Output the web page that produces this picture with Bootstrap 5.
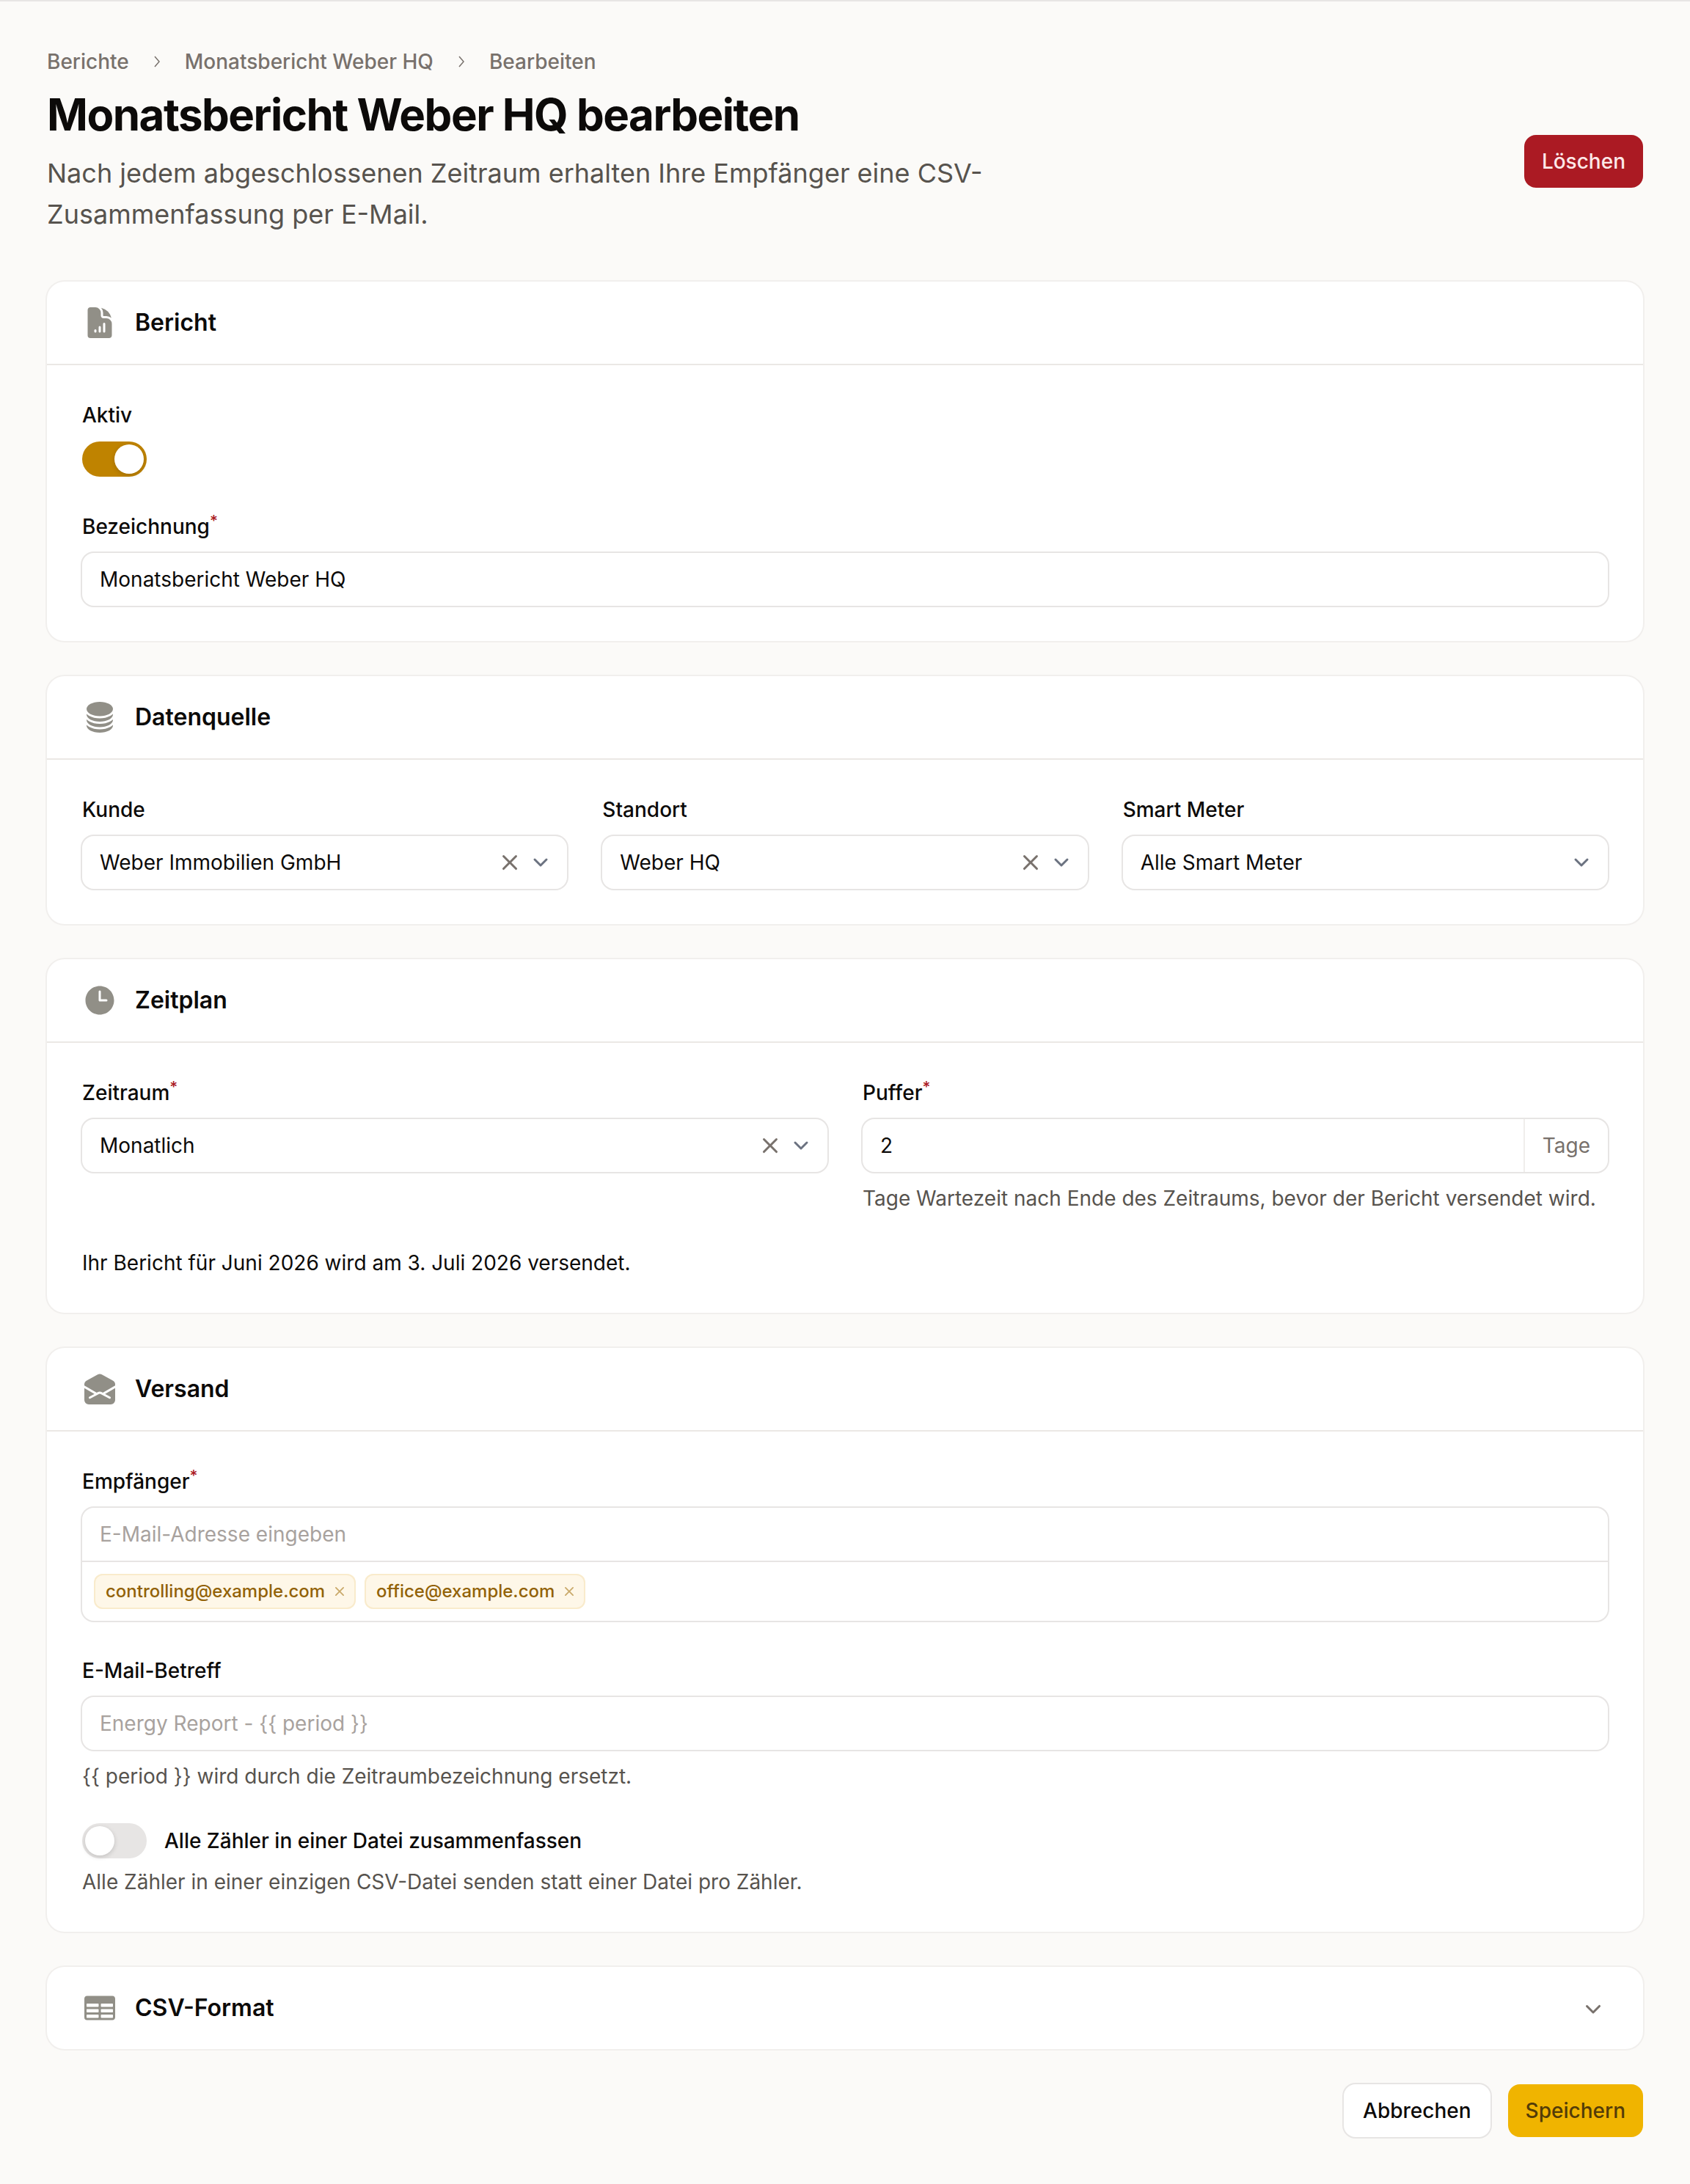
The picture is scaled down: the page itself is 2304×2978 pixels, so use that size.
<!DOCTYPE html>
<html lang="de">
<head>
    <meta charset="UTF-8">
    <meta name="viewport" content="width=device-width, initial-scale=1.0">
    <title>Monatsbericht Weber HQ bearbeiten</title>
    <link href="https://cdn.jsdelivr.net/npm/bootstrap@5.3.3/dist/css/bootstrap.min.css" rel="stylesheet">
    <style>
        body { background: #fbfaf8; color: #0c0a09; font-family: Inter, "Liberation Sans", sans-serif; font-size: 28px; line-height: 40px; border-top: 2px solid #e7e5e4; }
        main { padding: 62px 64px 64px; }
        svg { display: block; flex-shrink: 0; }

        .crumbs { color: #78716c; font-weight: 500; height: 40px; margin-bottom: 16px; gap: 28px; }
        .crumbs svg { width: 20px; height: 20px; }
        h1 { font-size: 60px; line-height: 72px; font-weight: 700; letter-spacing: -1.5px; margin: 0 0 16px; }
        .lead-text { font-size: 36px; line-height: 56px; color: #57534e; max-width: 1344px; margin: 0; font-weight: 400; }
        .page-head { margin-bottom: 64px; }

        .btn-x { font-size: 28px; line-height: 40px; font-weight: 500; height: 72px; padding: 16px 24px; border: 0; border-radius: 16px; }
        .btn-danger-x { background: #ab1a23; color: #fde8e8; }
        .btn-cancel { background: #fff; color: #0c0a09; box-shadow: 0 0 0 2px #e7e5e4; padding: 16px 26px; }
        .btn-save { background: #f0b400; color: #533c08; }

        .card { border: 0; border-radius: 24px; box-shadow: 0 0 0 2px #f1efed; margin-bottom: 48px; background: #fff; }
        .card-header { background: transparent; border: 0; padding: 32px 48px; height: 112px; gap: 24px; border-radius: 24px 24px 0 0 !important; }
        .card-header svg.ic { width: 48px; height: 48px; fill: #918f87; }
        .card-title { font-size: 32px; line-height: 48px; font-weight: 600; margin: 0; }
        .card-body { padding: 48px; border-top: 2px solid #ebe8e5; }

        .form-label { font-weight: 500; margin-bottom: 16px; display: block; }
        sup.req { color: #ab1a23; font-weight: 500; }
        .field + .field { margin-top: 48px; }

        .box { background: #fff; border-radius: 16px; box-shadow: 0 0 0 2px #e7e5e4; height: 72px; }
        .box .form-control { background: transparent; border: 0; box-shadow: none; font-size: 28px; line-height: 40px; padding: 16px 24px; color: #0c0a09; height: 72px; border-radius: 16px; }
        .box .form-control::placeholder { color: #a8a29e; opacity: 1; }
        .sel { padding: 16px 16px 16px 24px; }
        .sel svg { width: 40px; height: 40px; }
        .sel .clear { fill: #78716c; margin-right: 2px; }
        .sel .arrow { fill: none; stroke: #6b7280; stroke-width: 1.5; stroke-linecap: round; stroke-linejoin: round; }
        .suffix { color: #78716c; padding: 16px 24px; border-left: 2px solid #f0eeec; }
        .hint { color: #57534e; margin-top: 16px; }

        .tgl { width: 88px; height: 48px; padding: 4px; border-radius: 24px; border: 0; display: flex; flex-shrink: 0; }
        .tgl span { width: 40px; height: 40px; border-radius: 50%; background: #fff; box-shadow: 0 2px 6px rgba(0,0,0,.16); }
        .tgl.on { background: #bf8300; justify-content: flex-end; }
        .tgl.off { background: #e7e5e4; margin: -4px 0; }
        .tgl-row { gap: 24px; font-weight: 500; }

        .tags-box { height: auto; }
        .tags { border-top: 2px solid #e7e5e4; padding: 16px; gap: 12px; }
        .tag { height: 48px; border-radius: 12px; background: #fef7e8; box-shadow: inset 0 0 0 2px #f9ebcc; color: #926207; font-size: 24px; line-height: 48px; font-weight: 500; padding: 0 10px 0 16px; gap: 8px; }
        .tag svg { width: 24px; height: 24px; fill: #c9a96a; }
        .collapse-arrow { width: 40px; height: 40px; fill: #78716c; }
        .actions { gap: 24px; }
    </style>
</head>
<body>
<main>
    <div class="crumbs d-flex align-items-center">
        <span>Berichte</span>
        <svg viewBox="0 0 20 20" fill="none" stroke="#78716c" stroke-width="1.5"><path d="m7 3 6 7-6 7"/></svg>
        <span>Monatsbericht Weber HQ</span>
        <svg viewBox="0 0 20 20" fill="none" stroke="#78716c" stroke-width="1.5"><path d="m7 3 6 7-6 7"/></svg>
        <span>Bearbeiten</span>
    </div>

    <div class="page-head d-flex align-items-center justify-content-between">
        <div>
            <h1>Monatsbericht Weber HQ bearbeiten</h1>
            <p class="lead-text">Nach jedem abgeschlossenen Zeitraum erhalten Ihre Empfänger eine CSV-Zusammenfassung per E-Mail.</p>
        </div>
        <button type="button" class="btn btn-x btn-danger-x">Löschen</button>
    </div>

    <form>
        <!-- Bericht -->
        <section class="card">
            <div class="card-header d-flex align-items-center">
                <svg class="ic" viewBox="0 0 24 24"><path fill-rule="evenodd" clip-rule="evenodd" d="M5.625 1.5H9a3.75 3.75 0 0 1 3.75 3.75v1.875c0 1.036.84 1.875 1.875 1.875H16.5a3.75 3.75 0 0 1 3.75 3.75v7.875c0 1.035-.84 1.875-1.875 1.875H5.625a1.875 1.875 0 0 1-1.875-1.875V3.375c0-1.036.84-1.875 1.875-1.875ZM9.75 17.25a.75.75 0 0 0-1.5 0V18a.75.75 0 0 0 1.5 0v-.75Zm2.25-3a.75.75 0 0 1 .75.75v3a.75.75 0 0 1-1.5 0v-3a.75.75 0 0 1 .75-.75Zm3.75-1.5a.75.75 0 0 0-1.5 0V18a.75.75 0 0 0 1.5 0v-5.25Z"/><path d="M14.25 5.25a5.23 5.23 0 0 0-1.279-3.434 9.768 9.768 0 0 1 6.963 6.963A5.23 5.23 0 0 0 16.5 7.5h-1.875a.375.375 0 0 1-.375-.375V5.25Z"/></svg>
                <h2 class="card-title">Bericht</h2>
            </div>
            <div class="card-body">
                <div class="field">
                    <span class="form-label">Aktiv</span>
                    <div class="tgl on"><span></span></div>
                </div>
                <div class="field">
                    <label class="form-label" for="name">Bezeichnung<sup class="req">*</sup></label>
                    <div class="box"><input id="name" class="form-control" type="text" value="Monatsbericht Weber HQ"></div>
                </div>
            </div>
        </section>

        <!-- Datenquelle -->
        <section class="card">
            <div class="card-header d-flex align-items-center">
                <svg class="ic" viewBox="0 0 24 24"><path d="M21 6.375c0 2.692-4.03 4.875-9 4.875S3 9.067 3 6.375 7.03 1.5 12 1.5s9 2.183 9 4.875Z"/><path d="M12 12.75c2.685 0 5.19-.586 7.078-1.609a8.283 8.283 0 0 0 1.897-1.384c.016.121.025.244.025.368C21 12.817 16.97 15 12 15s-9-2.183-9-4.875c0-.124.009-.247.025-.368a8.285 8.285 0 0 0 1.897 1.384C6.809 12.164 9.315 12.75 12 12.75Z"/><path d="M12 16.5c2.685 0 5.19-.586 7.078-1.609a8.282 8.282 0 0 0 1.897-1.384c.016.121.025.244.025.368 0 2.692-4.03 4.875-9 4.875s-9-2.183-9-4.875c0-.124.009-.247.025-.368a8.284 8.284 0 0 0 1.897 1.384C6.809 15.914 9.315 16.5 12 16.5Z"/><path d="M12 20.25c2.685 0 5.19-.586 7.078-1.609a8.282 8.282 0 0 0 1.897-1.384c.016.121.025.244.025.368 0 2.692-4.03 4.875-9 4.875s-9-2.183-9-4.875c0-.124.009-.247.025-.368a8.284 8.284 0 0 0 1.897 1.384C6.809 19.664 9.315 20.25 12 20.25Z"/></svg>
                <h2 class="card-title">Datenquelle</h2>
            </div>
            <div class="card-body">
                <div class="row gx-5">
                    <div class="col-4">
                        <span class="form-label">Kunde</span>
                        <div class="box sel d-flex align-items-center">
                            <span class="flex-grow-1">Weber Immobilien GmbH</span>
                            <svg class="clear" viewBox="0 0 20 20"><path d="M6.28 5.22a.75.75 0 0 0-1.06 1.06L8.94 10l-3.72 3.72a.75.75 0 1 0 1.06 1.06L10 11.06l3.72 3.72a.75.75 0 1 0 1.06-1.06L11.06 10l3.72-3.72a.75.75 0 0 0-1.06-1.06L10 8.94 6.28 5.22Z"/></svg>
                            <svg class="arrow" viewBox="0 0 20 20"><path d="m6 8 4 4 4-4"/></svg>
                        </div>
                    </div>
                    <div class="col-4">
                        <span class="form-label">Standort</span>
                        <div class="box sel d-flex align-items-center">
                            <span class="flex-grow-1">Weber HQ</span>
                            <svg class="clear" viewBox="0 0 20 20"><path d="M6.28 5.22a.75.75 0 0 0-1.06 1.06L8.94 10l-3.72 3.72a.75.75 0 1 0 1.06 1.06L10 11.06l3.72 3.72a.75.75 0 1 0 1.06-1.06L11.06 10l3.72-3.72a.75.75 0 0 0-1.06-1.06L10 8.94 6.28 5.22Z"/></svg>
                            <svg class="arrow" viewBox="0 0 20 20"><path d="m6 8 4 4 4-4"/></svg>
                        </div>
                    </div>
                    <div class="col-4">
                        <span class="form-label">Smart Meter</span>
                        <div class="box sel d-flex align-items-center">
                            <span class="flex-grow-1">Alle Smart Meter</span>
                            <svg class="arrow" viewBox="0 0 20 20"><path d="m6 8 4 4 4-4"/></svg>
                        </div>
                    </div>
                </div>
            </div>
        </section>

        <!-- Zeitplan -->
        <section class="card">
            <div class="card-header d-flex align-items-center">
                <svg class="ic" viewBox="0 0 24 24"><path fill-rule="evenodd" clip-rule="evenodd" d="M12 2.25c-5.385 0-9.75 4.365-9.75 9.75s4.365 9.75 9.75 9.75 9.75-4.365 9.75-9.75S17.385 2.25 12 2.25ZM12.75 6a.75.75 0 0 0-1.5 0v6c0 .414.336.75.75.75h4.5a.75.75 0 0 0 0-1.5h-3.75V6Z"/></svg>
                <h2 class="card-title">Zeitplan</h2>
            </div>
            <div class="card-body">
                <div class="row gx-5">
                    <div class="col-6">
                        <span class="form-label">Zeitraum<sup class="req">*</sup></span>
                        <div class="box sel d-flex align-items-center">
                            <span class="flex-grow-1">Monatlich</span>
                            <svg class="clear" viewBox="0 0 20 20"><path d="M6.28 5.22a.75.75 0 0 0-1.06 1.06L8.94 10l-3.72 3.72a.75.75 0 1 0 1.06 1.06L10 11.06l3.72 3.72a.75.75 0 1 0 1.06-1.06L11.06 10l3.72-3.72a.75.75 0 0 0-1.06-1.06L10 8.94 6.28 5.22Z"/></svg>
                            <svg class="arrow" viewBox="0 0 20 20"><path d="m6 8 4 4 4-4"/></svg>
                        </div>
                    </div>
                    <div class="col-6">
                        <label class="form-label" for="puffer">Puffer<sup class="req">*</sup></label>
                        <div class="box d-flex">
                            <input id="puffer" class="form-control flex-grow-1" type="text" value="2">
                            <span class="suffix">Tage</span>
                        </div>
                        <div class="hint">Tage Wartezeit nach Ende des Zeitraums, bevor der Bericht versendet wird.</div>
                    </div>
                </div>
                <div class="mt-5">Ihr Bericht für Juni 2026 wird am 3. Juli 2026 versendet.</div>
            </div>
        </section>

        <!-- Versand -->
        <section class="card">
            <div class="card-header d-flex align-items-center">
                <svg class="ic" viewBox="0 0 24 24"><path d="M19.5 22.5a3 3 0 0 0 3-3v-8.174l-6.879 4.022 3.485 1.876a.75.75 0 1 1-.712 1.321l-5.683-3.06a1.5 1.5 0 0 0-1.422 0l-5.683 3.06a.75.75 0 0 1-.712-1.32l3.485-1.877L1.5 11.326V19.5a3 3 0 0 0 3 3h15Z"/><path d="M1.5 9.589v-.745a3 3 0 0 1 1.578-2.642l7.5-4.038a3 3 0 0 1 2.844 0l7.5 4.038A3 3 0 0 1 22.5 8.844v.745l-8.426 4.926-.652-.351a3 3 0 0 0-2.844 0l-.652.351L1.5 9.589Z"/></svg>
                <h2 class="card-title">Versand</h2>
            </div>
            <div class="card-body">
                <div class="field">
                    <label class="form-label" for="mail">Empfänger<sup class="req">*</sup></label>
                    <div class="box tags-box">
                        <input id="mail" class="form-control" type="text" placeholder="E-Mail-Adresse eingeben">
                        <div class="tags d-flex">
                            <span class="tag d-flex align-items-center">controlling@example.com
                                <svg viewBox="0 0 20 20"><path d="M6.28 5.22a.75.75 0 0 0-1.06 1.06L8.94 10l-3.72 3.72a.75.75 0 1 0 1.06 1.06L10 11.06l3.72 3.72a.75.75 0 1 0 1.06-1.06L11.06 10l3.72-3.72a.75.75 0 0 0-1.06-1.06L10 8.94 6.28 5.22Z"/></svg></span>
                            <span class="tag d-flex align-items-center">office@example.com
                                <svg viewBox="0 0 20 20"><path d="M6.28 5.22a.75.75 0 0 0-1.06 1.06L8.94 10l-3.72 3.72a.75.75 0 1 0 1.06 1.06L10 11.06l3.72 3.72a.75.75 0 1 0 1.06-1.06L11.06 10l3.72-3.72a.75.75 0 0 0-1.06-1.06L10 8.94 6.28 5.22Z"/></svg></span>
                        </div>
                    </div>
                </div>
                <div class="field">
                    <label class="form-label" for="subject">E-Mail-Betreff</label>
                    <div class="box"><input id="subject" class="form-control" type="text" placeholder="Energy Report - {{ period }}"></div>
                    <div class="hint">{{ period }} wird durch die Zeitraumbezeichnung ersetzt.</div>
                </div>
                <div class="field">
                    <div class="tgl-row d-flex align-items-center">
                        <div class="tgl off"><span></span></div>
                        <span>Alle Zähler in einer Datei zusammenfassen</span>
                    </div>
                    <div class="hint">Alle Zähler in einer einzigen CSV-Datei senden statt einer Datei pro Zähler.</div>
                </div>
            </div>
        </section>

        <!-- CSV-Format -->
        <section class="card">
            <div class="card-header d-flex align-items-center">
                <svg class="ic" viewBox="0 0 24 24"><path fill-rule="evenodd" clip-rule="evenodd" d="M1.5 5.625c0-1.036.84-1.875 1.875-1.875h17.25c1.035 0 1.875.84 1.875 1.875v12.75c0 1.035-.84 1.875-1.875 1.875H3.375A1.875 1.875 0 0 1 1.5 18.375V5.625ZM21 9.375A.375.375 0 0 0 20.625 9h-7.5a.375.375 0 0 0-.375.375v1.5c0 .207.168.375.375.375h7.5a.375.375 0 0 0 .375-.375v-1.5Zm0 3.75a.375.375 0 0 0-.375-.375h-7.5a.375.375 0 0 0-.375.375v1.5c0 .207.168.375.375.375h7.5a.375.375 0 0 0 .375-.375v-1.5Zm0 3.75a.375.375 0 0 0-.375-.375h-7.5a.375.375 0 0 0-.375.375v1.5c0 .207.168.375.375.375h7.5a.375.375 0 0 0 .375-.375v-1.5ZM10.875 18.75a.375.375 0 0 0 .375-.375v-1.5a.375.375 0 0 0-.375-.375h-7.5a.375.375 0 0 0-.375.375v1.5c0 .207.168.375.375.375h7.5ZM3.375 15h7.5a.375.375 0 0 0 .375-.375v-1.5a.375.375 0 0 0-.375-.375h-7.5a.375.375 0 0 0-.375.375v1.5c0 .207.168.375.375.375Zm0-3.75h7.5a.375.375 0 0 0 .375-.375v-1.5A.375.375 0 0 0 10.875 9h-7.5A.375.375 0 0 0 3 9.375v1.5c0 .207.168.375.375.375Z"/></svg>
                <h2 class="card-title flex-grow-1">CSV-Format</h2>
                <svg class="collapse-arrow" viewBox="0 0 20 20"><path d="M5.22 8.22a.75.75 0 0 1 1.06 0L10 11.94l3.72-3.72a.75.75 0 1 1 1.06 1.06l-4.25 4.25a.75.75 0 0 1-1.06 0L5.22 9.28a.75.75 0 0 1 0-1.06Z"/></svg>
            </div>
        </section>

        <div class="actions d-flex justify-content-end">
            <button type="button" class="btn btn-x btn-cancel">Abbrechen</button>
            <button type="button" class="btn btn-x btn-save">Speichern</button>
        </div>
    </form>
</main>
<script src="https://cdn.jsdelivr.net/npm/bootstrap@5.3.3/dist/js/bootstrap.bundle.min.js"></script>
</body>
</html>
